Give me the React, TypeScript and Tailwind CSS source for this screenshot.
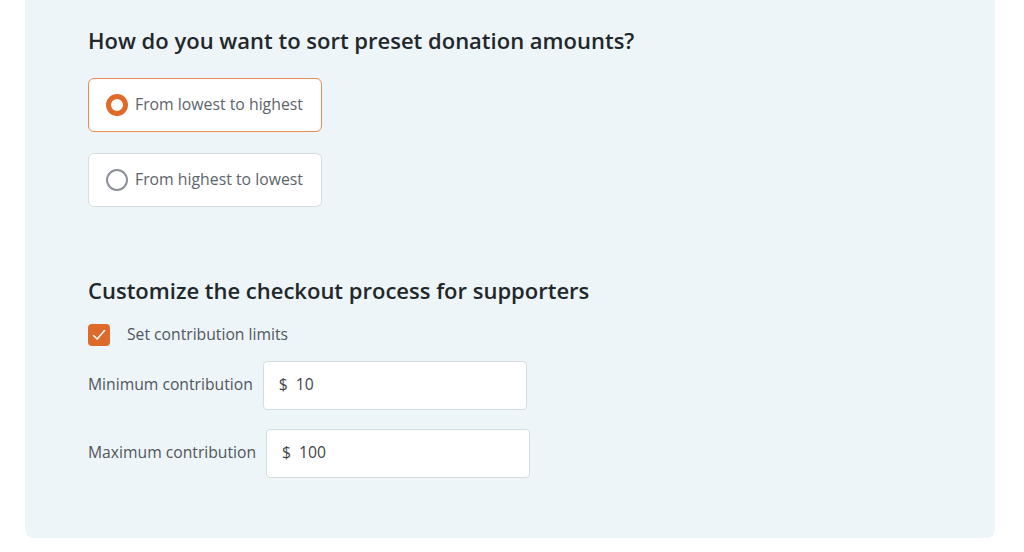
import { useState } from 'react';

const font = { fontFamily: '"Open Sans", "Noto Sans", sans-serif' };

function RadioCard({ label, checked, onClick }: { label: string; checked: boolean; onClick: () => void }) {
  return (
    <button
      type="button"
      onClick={onClick}
      className={`flex items-center w-[234px] h-[54px] rounded-md bg-white px-[17px] text-left border whitespace-nowrap ${
        checked ? 'border-[#ec8b52]' : 'border-[#d6dce2]'
      }`}
    >
      {checked ? (
        <span className="w-[22px] h-[22px] rounded-full border-[5px] border-[#e06a2a] bg-white shrink-0" />
      ) : (
        <span className="w-[22px] h-[22px] rounded-full border-2 border-[#8b9099] bg-white shrink-0" />
      )}
      <span className="ml-[7px] text-[15.8px] text-[#5d636b]">{label}</span>
    </button>
  );
}

function AmountRow({ label, value }: { label: string; value: string }) {
  return (
    <div className="flex items-center">
      <span className="text-[15.7px] text-[#50565e] whitespace-nowrap">{label}</span>
      <div className="ml-[10px] flex items-center w-[264px] h-[49px] rounded-[4px] border border-[#d5dde3] bg-white px-[15px] text-[15.7px] text-[#3f444a]">
        <span>$</span>
        <span className="ml-[8px]">{value}</span>
      </div>
    </div>
  );
}

export default function App() {
  const [order, setOrder] = useState<'asc' | 'desc'>('asc');
  const [limits, setLimits] = useState(true);

  return (
    <div className="w-[1024px] h-[552px] bg-white" style={font}>
      <div className="ml-[25px] w-[970px] h-[538px] rounded-b-lg bg-[#edf5f8] pl-[63px] pt-[25px]">
        <h2 className="text-[22px] leading-[30px] font-semibold text-[#22272c]">
          How do you want to sort preset donation amounts?
        </h2>
        <div className="mt-[23px] flex flex-col gap-[21px]">
          <RadioCard label="From lowest to highest" checked={order === 'asc'} onClick={() => setOrder('asc')} />
          <RadioCard label="From highest to lowest" checked={order === 'desc'} onClick={() => setOrder('desc')} />
        </div>

        <h2 className="mt-[68px] text-[22px] leading-[30px] font-semibold text-[#22272c]">
          Customize the checkout process for supporters
        </h2>
        <label className="mt-[18px] flex items-center cursor-pointer" onClick={() => setLimits(!limits)}>
          <span
            className={`w-[22px] h-[22px] rounded-[4px] flex items-center justify-center ${
              limits ? 'bg-[#dd6a2b]' : 'bg-white border border-[#8b9099]'
            }`}
          >
            {limits && (
              <svg width="16" height="16" viewBox="0 0 16 16" fill="none">
                <path d="M2.5 8.5 L6.2 12 L13.5 3.5" stroke="white" strokeWidth="1.6" strokeLinecap="round" strokeLinejoin="round" />
              </svg>
            )}
          </span>
          <span className="ml-[17px] text-[15.7px] text-[#50565e]">Set contribution limits</span>
        </label>
        <div className="mt-[14px] flex flex-col gap-[19px]">
          <AmountRow label="Minimum contribution" value="10" />
          <AmountRow label="Maximum contribution" value="100" />
        </div>
      </div>
    </div>
  );
}
